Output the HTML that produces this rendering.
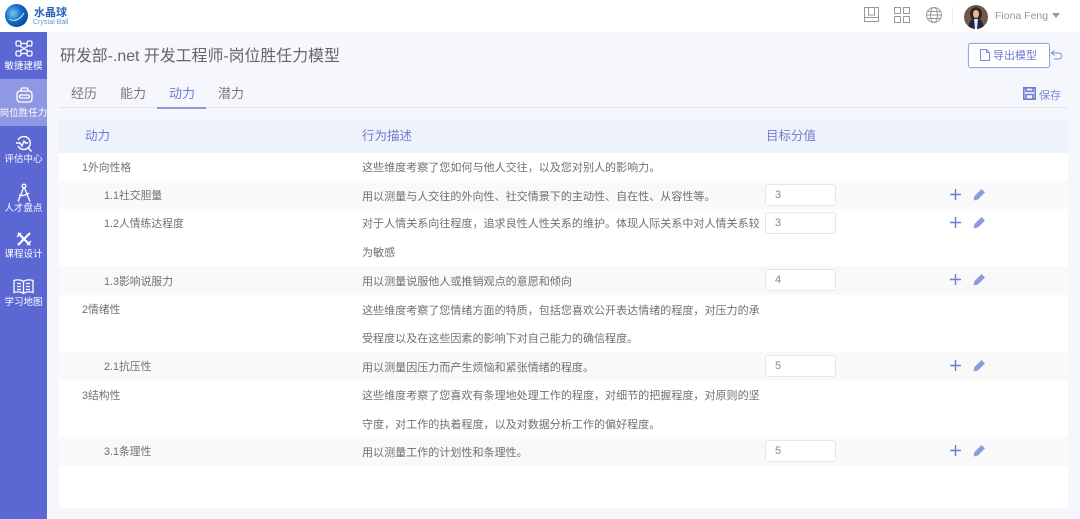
<!DOCTYPE html>
<html lang="zh"><head><meta charset="utf-8"><style>
*{box-sizing:border-box}
html,body{margin:0;padding:0}
body{width:1080px;height:519px;position:relative;overflow:hidden;background:#f5f7fc;font-family:"Liberation Sans","Noto Sans CJK SC",sans-serif;color:#666}
#w{position:absolute;left:0;top:0;width:1080px;height:519px;filter:blur(.35px)}
.a{position:absolute;white-space:nowrap}
.top{left:0;top:0;width:1080px;height:32px;background:#fff}
.side{left:0;top:32px;width:47px;height:487px;background:#5b68d3}
.act{left:0;top:79px;width:47px;height:47px;background:#8f98e2}
.nav{left:0;width:47px;text-align:center;color:#fff;font-size:9.5px;line-height:12px}
.t{font-size:10.8px;line-height:14px;color:#707070}
.d{font-size:11.05px;left:362px}
.tab{font-size:13px;line-height:16px;top:86px;color:#777}
.h{font-size:12.5px;line-height:16px;top:128px;color:#6f7cd6}
.row{left:59px;width:1009px;background:#f9f9f9}
.inp{left:765px;width:71px;height:22px;background:#fff;border:1px solid #e4e6ea;border-radius:3px;font-size:11px;line-height:21px;padding-left:9px;color:#888}
svg{position:absolute;overflow:visible}
</style></head><body><div id="w">
<div class="a top"></div>
<div class="a side"></div>
<div class="a act"></div>

<!-- logo -->
<svg style="left:5px;top:4px" width="23" height="23" viewBox="0 0 23 23"><defs><radialGradient id="g" cx=".35" cy=".4" r=".7"><stop offset="0" stop-color="#7cc4f0"/><stop offset=".5" stop-color="#1572c8"/><stop offset="1" stop-color="#0b3f94"/></radialGradient></defs><circle cx="11.5" cy="11.5" r="11.5" fill="url(#g)"/><path d="M4 15c5 3 11 1 15-6" stroke="#cfe8fa" stroke-width="1" fill="none"/></svg>
<div class="a" style="left:34px;top:6px;font-size:11px;line-height:14px;font-weight:bold;color:#2b62b8">水晶球</div>
<div class="a" style="left:33px;top:18px;font-size:7px;line-height:9px;color:#5b9ad8">Crystal Ball</div>

<!-- side icons -->
<svg style="left:15px;top:40px" width="18" height="17" fill="none" stroke="#fff" stroke-width="1.3"><rect x="1" y="1" width="5" height="5" rx="1.500"/><rect x="12" y="1" width="5" height="5" rx="1.500"/><rect x="1" y="11" width="5" height="5" rx="1.500"/><rect x="12" y="11" width="5" height="5" rx="1.500"/><path d="M6 3.500h6M6 13.500h6M5 6l8 5M13 6l-8 5"/></svg>
<div class="a nav" style="top:61px">敏捷建模</div>
<svg style="left:16px;top:87px" width="17" height="16" fill="none" stroke="#fff" stroke-width="1.300"><rect x="1" y="4" width="15" height="11" rx="3"/><path d="M5 4V2.500Q5 1 6.500 1h4Q12 1 12 2.500V4"/><rect x="3.500" y="8" width="10" height="3" rx="1.500"/></svg>
<div class="a nav" style="top:108px;left:-1px;width:49px">岗位胜任力</div>
<svg style="left:15px;top:135px" width="18" height="17" fill="none" stroke="#fff" stroke-width="1.400"><path d="M3 5a6.500 6.500 0 1 1 0 6"/><path d="M12.500 12l4 4.500M1 8h4l2 3 2-5 1.500 2H13"/></svg>
<div class="a nav" style="top:154px">评估中心</div>
<svg style="left:17px;top:183px" width="14" height="19" fill="none" stroke="#fff" stroke-width="1.300"><circle cx="7" cy="3" r="1.800"/><path d="M6.500 5L1 18.500M7.500 5L13 18.500M2 12c3 1 7 .5 10-2"/></svg>
<div class="a nav" style="top:203px">人才盘点</div>
<svg style="left:15px;top:231px" width="18" height="16" fill="none" stroke="#fff" stroke-width="2.200"><path d="M3 2l12 12M15 2L3 14"/><path d="M2 6l4-4M12 14l4-4" stroke-width="1.300"/></svg>
<div class="a nav" style="top:249px">课程设计</div>
<svg style="left:13px;top:279px" width="21" height="15" fill="none" stroke="#fff" stroke-width="1.300"><path d="M10.500 2.500C8 .5 4 .5 1 1.500v12c3-1 7-1 9.500 1 2.500-2 6.500-2 9.500-1v-12c-3-1-7-1-9.500 1zM10.500 2.500v12M4 4.500h4M4 7.500h4M4 10.500h4M13 4.500h4M13 7.500h4M13 10.500h4"/></svg>
<div class="a nav" style="top:297px">学习地图</div>

<!-- top right -->
<svg style="left:864px;top:7px" width="15" height="15" fill="none" stroke="#999" stroke-width="1"><rect x=".5" y=".5" width="14" height="14"/><path d="M.5 10.500h14M4.500 .5v7.500h6V.5"/></svg>
<svg style="left:894px;top:7px" width="16" height="16" fill="none" stroke="#999" stroke-width="1"><rect x=".5" y=".5" width="6" height="6"/><rect x="9.500" y=".5" width="6" height="6"/><rect x=".5" y="9.500" width="6" height="6"/><rect x="9.500" y="9.500" width="6" height="6"/></svg>
<svg style="left:926px;top:7px" width="16" height="16" fill="none" stroke="#999" stroke-width="1"><circle cx="8" cy="8" r="7.500"/><ellipse cx="8" cy="8" rx="3.500" ry="7.500"/><path d="M.5 8h15M1.500 4.500h13M1.500 11.500h13"/></svg>
<div class="a" style="left:952px;top:6px;width:1px;height:19px;background:#f0f0f0"></div>
<svg style="left:964px;top:5px" width="24" height="24" viewBox="0 0 24 24"><defs><clipPath id="c"><circle cx="12" cy="12" r="12"/></clipPath></defs><g clip-path="url(#c)"><rect width="24" height="24" fill="#6e5a4c"/><ellipse cx="12" cy="9" rx="6" ry="7" fill="#3c2418"/><ellipse cx="12" cy="9" rx="3" ry="4" fill="#e2bba6"/><path d="M4 24q1-11 8-11t8 11z" fill="#20283c"/><path d="M10 14h4l-1 10h-2z" fill="#e8e8ee"/></g></svg>
<div class="a" style="left:995px;top:9px;font-size:10.500px;line-height:14px;color:#999">Fiona Feng</div>
<div class="a" style="left:1052px;top:13px;border:4px solid transparent;border-top:5px solid #999;border-bottom:0"></div>

<!-- title -->
<div class="a" style="left:60px;top:47px;font-size:15.9px;line-height:20px;color:#666">研发部-.net 开发工程师-岗位胜任力模型</div>
<div class="a" style="left:968px;top:43px;width:82px;height:25px;background:#fff;border:1px solid #97a4e2;border-radius:3px;box-shadow:0 0 1px #b5bdea"></div>
<svg style="left:980px;top:49px" width="10" height="12" fill="none" stroke="#7f8bd8" stroke-width="1"><path d="M.5 .5h6l3 3v8h-9zM6.500 .5v3h3"/></svg>
<div class="a" style="left:993px;top:49px;font-size:11px;line-height:14px;color:#6f7cd6">导出模型</div>
<svg style="left:1051px;top:50px" width="11" height="10" fill="none" stroke="#7f8bd8" stroke-width="1"><path d="M3.500 .5L.5 3l3 2.500M.5 3h7Q10.500 3 10.500 6T7.500 9H3"/></svg>

<!-- tabs -->
<div class="a tab" style="left:71px">经历</div>
<div class="a tab" style="left:120px">能力</div>
<div class="a tab" style="left:169px;color:#6f7cd6">动力</div>
<div class="a tab" style="left:218px">潜力</div>
<div class="a" style="left:59px;top:107px;width:1009px;height:1px;background:#e3e5ec"></div>
<div class="a" style="left:157px;top:107px;width:49px;height:2px;background:#8f9ade"></div>
<svg style="left:1023px;top:87px" width="13" height="13" fill="none" stroke="#6f7cd6" stroke-width="1.600"><path d="M.8 .8h11.400v11.400H.8zM3 .8v3.500h7V.8M3 12V7.500h7V12"/></svg>
<div class="a" style="left:1039px;top:89px;font-size:11px;line-height:14px;color:#7f8bd8">保存</div>

<!-- table -->
<div class="a" style="left:59px;top:119px;width:1009px;height:34px;background:#eef2fb"></div>
<div class="a" style="left:59px;top:153px;width:1009px;height:355px;background:#fff"></div>
<div class="a row" style="top:181px;height:28px"></div>
<div class="a row" style="top:266px;height:29px"></div>
<div class="a row" style="top:352px;height:28px"></div>
<div class="a row" style="top:437px;height:29px"></div>
<div class="a h" style="left:85px">动力</div>
<div class="a h" style="left:362px">行为描述</div>
<div class="a h" style="left:766px">目标分值</div>

<div class="a t" style="left:82px;top:161px">1外向性格</div>
<div class="a t d" style="top:161px">这些维度考察了您如何与他人交往，以及您对别人的影响力。</div>
<div class="a t" style="left:104px;top:189px">1.1社交胆量</div>
<div class="a t d" style="top:190px">用以测量与人交往的外向性、社交情景下的主动性、自在性、从容性等。</div>
<div class="a t" style="left:104px;top:217px">1.2人情练达程度</div>
<div class="a t d" style="top:217px">对于人情关系向往程度，追求良性人性关系的维护。体现人际关系中对人情关系较</div>
<div class="a t d" style="top:246px">为敏感</div>
<div class="a t" style="left:104px;top:275px">1.3影响说服力</div>
<div class="a t d" style="top:275px">用以测量说服他人或推销观点的意愿和倾向</div>
<div class="a t" style="left:82px;top:303px">2情绪性</div>
<div class="a t d" style="top:304px">这些维度考察了您情绪方面的特质，包括您喜欢公开表达情绪的程度，对压力的承</div>
<div class="a t d" style="top:332px">受程度以及在这些因素的影响下对自己能力的确信程度。</div>
<div class="a t" style="left:104px;top:360px">2.1抗压性</div>
<div class="a t d" style="top:361px">用以测量因压力而产生烦恼和紧张情绪的程度。</div>
<div class="a t" style="left:82px;top:389px">3结构性</div>
<div class="a t d" style="top:389px">这些维度考察了您喜欢有条理地处理工作的程度，对细节的把握程度，对原则的坚</div>
<div class="a t d" style="top:418px">守度，对工作的执着程度，以及对数据分析工作的偏好程度。</div>
<div class="a t" style="left:104px;top:445px">3.1条理性</div>
<div class="a t d" style="top:446px">用以测量工作的计划性和条理性。</div>

<div class="a inp" style="top:184px">3</div>
<div class="a inp" style="top:212px">3</div>
<div class="a inp" style="top:269px">4</div>
<div class="a inp" style="top:355px">5</div>
<div class="a inp" style="top:440px">5</div>

<svg width="0" height="0" style="left:0;top:0"><defs><g id="ic"><path d="M5.500 0v11M0 5.500h11" stroke="#6f7cd6" stroke-width="1.400" fill="none"/><path d="M23.500 11.500l1-4.500 7-7 3.500 3.500-7 7z" fill="#8f9ade"/></g></defs></svg>
<svg style="left:950px;top:189px" width="36" height="12"><use href="#ic"/></svg>
<svg style="left:950px;top:217px" width="36" height="12"><use href="#ic"/></svg>
<svg style="left:950px;top:274px" width="36" height="12"><use href="#ic"/></svg>
<svg style="left:950px;top:360px" width="36" height="12"><use href="#ic"/></svg>
<svg style="left:950px;top:445px" width="36" height="12"><use href="#ic"/></svg>
</div></body></html>
